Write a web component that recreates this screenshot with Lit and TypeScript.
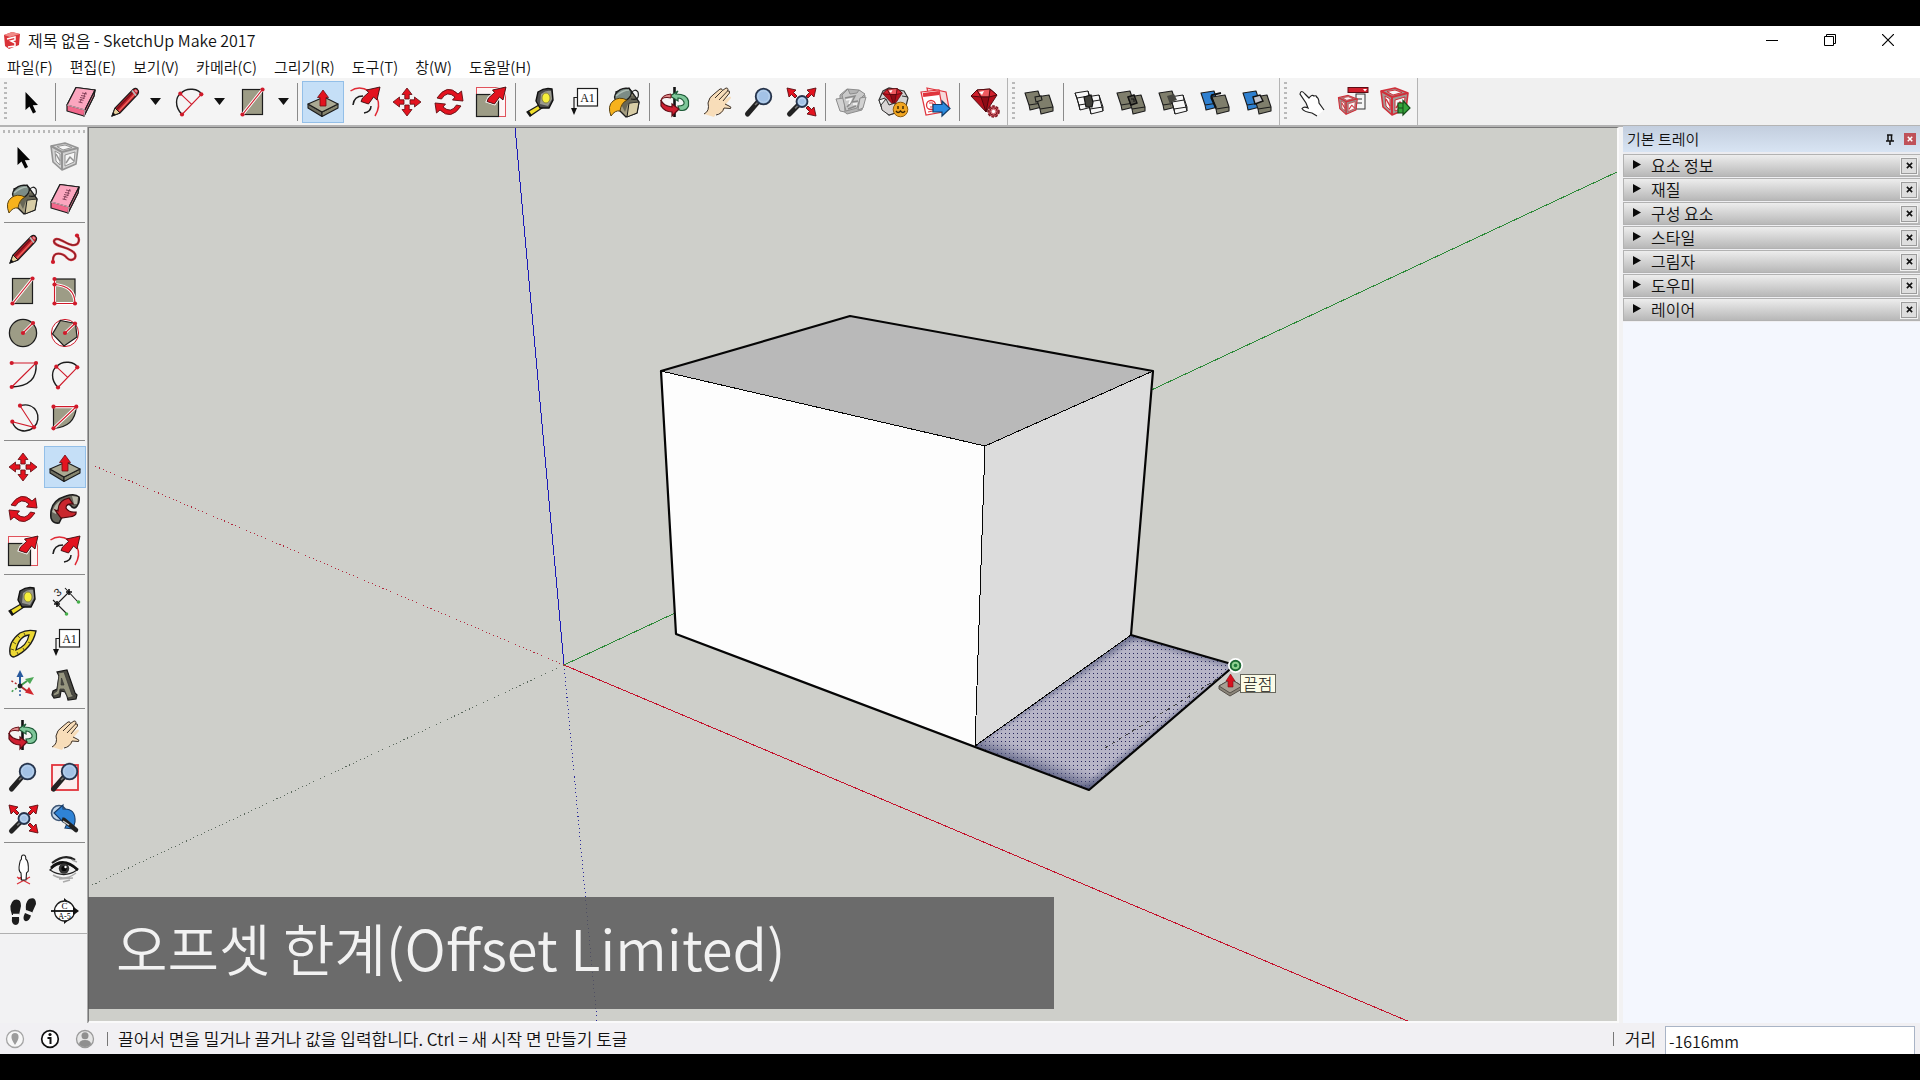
import { LitElement, html, svg, css, SVGTemplateResult } from "lit";
import { customElement, property } from "lit/decorators.js";
import { classMap } from "lit/directives/class-map.js";

const RED = "#e3131f";
const INK = "#1c1c1c";
const STONE = "#9d9c86";
const STONE_DARK = "#6e6d5f";

const dot = (x: number, y: number) => svg`<circle cx=${x} cy=${y} r="2.1" fill="#cf1a2a" />`;
const redLine = (d: string) => svg`
  <path d=${d} fill="none" stroke="#fff" stroke-width="3" />
  <path d=${d} fill="none" stroke="#cf1a2a" stroke-width="1.2" />`;
const wire = (d: string) => svg`<path d=${d} fill="none" stroke="#cf1a2a" stroke-width="1.1" />`;
const curve = (d: string) => svg`<path d=${d} fill="none" stroke=${INK} stroke-width="1.4" />`;

const lens = (cx: number, cy: number, r: number, hx: number, hy: number) => svg`
  <path d=${`M${cx - r * 0.7} ${cy + r * 0.7} L${hx} ${hy}`} stroke="#222" stroke-width="5" stroke-linecap="round" />
  <path d=${`M${cx - r * 0.7} ${cy + r * 0.7} l-3 3`} stroke="#777" stroke-width="1.6" />
  <circle cx=${cx} cy=${cy} r=${r} fill="#8fb4dc" stroke="#26334a" stroke-width="1.8" />
  <circle cx=${cx} cy=${cy} r=${r - 2} fill="#a3c2e6" stroke="#c3d8ee" stroke-width="1" />`;

const cornerArrow = (x: number, y: number, turn: number) => svg`
  <path transform=${`translate(${x} ${y}) rotate(${turn})`}
    d="M0 0 L9 2 L6.5 4.5 L10 8 L8 10 L4.5 6.5 L2 9 Z" fill=${RED} stroke="#5d0d12" stroke-width=".9" />`;

const bigArrow = svg`
  <path d="M31 1 L28 14 L24.500 11 L19.500 18 L12 15.500 L13.500 12 L19.500 6.500 L17.500 4 Z"
    fill=${RED} stroke="#3a0a0c" stroke-width=".9" />`;

const block = (x: number, y: number, fill: string, line = INK) => svg`
  <g transform=${`translate(${x} ${y})`} fill=${fill} stroke=${line} stroke-width="1.1" stroke-linejoin="round">
    <path d="M1 3 L14 1 L18 13 L18 17 L6 20 L5 15 Z" />
    <path d="M5 15 L18 13" fill="none" />
  </g>`;

const wireBlock = (x: number, y: number) => svg`
  <g transform=${`translate(${x} ${y})`} fill="#f7f7f7" stroke=${INK} stroke-width="1" stroke-linejoin="round">
    <path d="M1 3 L14 1 L18 13 L18 17 L6 20 L5 15 Z" />
    <path d="M5 15 L18 13 M1 3 L3 8 L15 6 L14 1 M3 8 L6 20 M15 6 L18 17" fill="none" />
  </g>`;

const crate = (tone: string, stroke: string) => svg`
  <g fill=${tone} stroke=${stroke} stroke-linejoin="round">
    <path d="M2 5 L16 2 L29 7 L27 23 L13 29 L4 21 Z" stroke-width="1.6" />
    <path d="M2 5 L13 11 L29 7 M13 11 V29" fill="none" stroke-width="2" />
    <path d="M6 10 L11 13 V24 L7 20 Z M16 14 L26 11 L25 21 L16 25 Z M8 5.500 L16 4 L23 6.500 L14 9 Z" fill="#f6f6f6" stroke-width="1" />
    <path d="M17 22 L21 16 L25 20 M7 13 L11 20" fill="none" stroke-width="1.5" />
  </g>`;

const gem = (x: number, y: number, s: number) => svg`
  <g transform=${`translate(${x} ${y}) scale(${s})`} stroke="#4b060b" stroke-width=".9" stroke-linejoin="round">
    <path d="M1 9 L7 3 L20 2 L27 8 L16 25 Z" fill="#b3101c" />
    <path d="M7 3 L11 10 L1 9 Z M20 2 L27 8 L19 10 Z" fill="#d0202c" />
    <path d="M7 3 L20 2 L19 10 L11 10 Z" fill="#ee5a5f" />
    <path d="M11 10 L19 10 L16 25 Z" fill="#8d0b15" />
    <path d="M9 5 L14 4 L12 8 Z" fill="#fff" stroke="none" />
  </g>`;

const ICONS: Record<string, SVGTemplateResult> = {
  select: svg`<path d="M10.500 6 V24 L14.500 20.500 L18 27.500 L21 26 L17.800 19.300 L23 19 Z" fill="#050505" />`,
  eraser: svg`
    <g stroke=${INK} stroke-width="1.2" stroke-linejoin="round">
      <path d="M2 19 L11 1.500 L30 4 L29 10 L19 30 L2 25 Z" fill="#f2688b" />
      <path d="M2 19 L11 1.500 L30 4 L20 24 Z" fill="#fba6bf" />
      <path d="M20 24 L30 4 L29 10 L19 30 Z" fill="#f7849f" />
    </g>
    <path d="M2 19 L20 24 L19 30" fill="none" stroke="#fdd3de" stroke-width=".8" />
    <path d="M13.500 16 l4 .8 M14.500 13.500 l4 .8 M15 11.500 l4.500 1 M16 9.500 l4.500 .8 M17 7 l5 1 M15 16 l1.500 -3 M18.500 13 l1 -3 M19 10 l2 -4" fill="none" stroke="#7b3a52" stroke-width=".9" />`,
  pencil: svg`
    <path d="M3 30 L6 22 L24 3.500 Q27 1 29 4 Q30.500 6 28 9 L11 27 Z" fill="#c5202b" stroke=${INK} stroke-width="1.2" />
    <path d="M8 23 L24 6" stroke="#7a0f18" stroke-width="1.600" /><path d="M10 25 L26 8" stroke="#ee6a62" stroke-width="1.200" />
    <path d="M3 30 L6 22 L11 27 Z" fill="#e6cf9c" stroke=${INK} stroke-width="1" /><path d="M3 30 L4.200 26.500 L6.500 28.500 Z" fill="#111" />
    <path d="M23 4.500 L27 9.500" stroke="#bbb" stroke-width="1.800" /><path d="M26 4 L28 6" stroke="#e28b93" stroke-width="2" />`,
  freehand: svg`
    <path d="M4 29 C3 16 15 21 18 25 C22 29 28 26 26 21 C23 14 4 14 5 8 C7 2 17 11 23 12 C31 13 31 5 28 3" fill="none" stroke="#d2303a" stroke-width="2.400" />
    <path d="M4 29 C3 16 15 21 18 25 C22 29 28 26 26 21 C23 14 4 14 5 8 C7 2 17 11 23 12 C31 13 31 5 28 3" fill="none" stroke="#5d1a20" stroke-width=".8" />
    ${dot(4, 29)}${dot(28, 2.5)}`,
  rect: svg`<rect x="5.500" y="3.500" width="20" height="25" fill=${STONE} stroke=${INK} stroke-width="1.200" />
    ${redLine("M5.500 28.500 L25.500 3.500")}${dot(5.5, 28.5)}${dot(25.5, 3.5)}`,
  rotRect: svg`<rect x="6" y="4" width="20" height="24.500" fill=${STONE} stroke=${INK} stroke-width="1.200" />
    ${redLine("M5.500 4 V28.500 H26 Q26 11 5.500 9.500")}${dot(5.5, 4)}${dot(5.5, 9.5)}${dot(5.5, 28.5)}${dot(26, 28.5)}`,
  circle: svg`<circle cx="16" cy="16" r="13.600" fill=${STONE} stroke=${INK} stroke-width="1.300" />
    ${redLine("M16 16 L26 6")}${dot(16, 16)}${dot(26, 6)}`,
  polygon: svg`<circle cx="16" cy="16" r="13.600" fill="#fff" stroke="#cf1a2a" stroke-width="1" />
    <path d="M11.500 3.500 L26.500 6.500 L28 20 L15 29 L3.500 17 Z" fill=${STONE} stroke=${INK} stroke-width="1.200" />
    ${redLine("M16 16 L26 6.500")}${dot(16, 16)}${dot(26, 6.5)}`,
  arc: svg`${curve("M29 4 Q31 27 4.700 28")}${wire("M4.700 4 H29 L4.700 28")}${dot(4.7, 4)}${dot(29, 4)}${dot(4.7, 28)}`,
  arc2: svg`${curve("M9 28.500 C1 20 3 11 7.300 7.700 C14 .5 26 3 28.300 8.300")}${wire("M9 28.500 L28.300 8.300 M7.300 7.700 L18.700 18.300")}${dot(9, 28.5)}${dot(7.3, 7.7)}${dot(28.3, 8.3)}`,
  arc3: svg`${curve("M13 4.700 C29 0 36 17 27 26.300 C19 33 8 30 5.300 20.700")}${wire("M13 4.700 L27 26.300 L5.300 20.700")}${dot(13, 4.7)}${dot(5.3, 20.7)}${dot(27, 26.3)}`,
  pie: svg`<path d="M4.500 5.700 H27.300 Q26 26 4.500 27.300 Z" fill=${STONE} stroke=${INK} stroke-width="1.200" />
    ${redLine("M4.500 5.700 H27.300 L4.500 27.300")}${dot(4.5, 5.7)}${dot(27.3, 5.7)}${dot(4.5, 27.3)}`,
  push: svg`
    <g stroke=${INK} stroke-width="1.100" stroke-linejoin="round">
      <path d="M1 18 L15 26 L15 30.500 L1 22 Z" fill=${STONE_DARK} />
      <path d="M15 26 L31 18 V22 L15 30.500 Z" fill="#87866f" />
      <path d="M1 18 L17 11 L31 18 L15 26 Z" fill="#aaa993" />
    </g>
    <path d="M13 20 V11.500 H10.500 L16 4 L21.500 11.500 H19 V20 Z" fill=${RED} stroke="#6d0c12" stroke-width=".8" />`,
  offset: svg`<path d="M1.500 5 Q10 -1 20 5 M28 12 Q32 20 26 30" fill="none" stroke="#e02a35" stroke-width="1.500" />
    <path d="M4 19 Q5 10 14 10 M22 20 Q22 26 15 27" fill="none" stroke=${INK} stroke-width="1.500" />${bigArrow}`,
  move: svg`<g fill=${RED} stroke="#5d0d12" stroke-width=".8">
      ${[0, 90, 180, 270].map((a) => svg`<path transform=${`rotate(${a} 16 16)`} d="M16 2 L21 8.500 H18.200 V13 H13.800 V8.500 H11 Z" />`)}
    </g>`,
  rotate: svg`<g fill=${RED} stroke="#5d0d12" stroke-width=".9" stroke-linejoin="round">
      <path d="M4 12 Q14 -3 25 8 L28.500 5 L30 15 L19.500 14 L22 11 Q14 4 8.500 13 Z" />
      <path d="M4 12 Q14 -3 25 8 L28.500 5 L30 15 L19.500 14 L22 11 Q14 4 8.500 13 Z" transform="rotate(180 16 16)" />
    </g>`,
  scale: svg`<rect x="1.500" y="1.500" width="29" height="29" fill="#fdf4f4" stroke="#e0525b" stroke-width="1" />
    <rect x="1.500" y="8.500" width="22" height="22" fill=${STONE} stroke=${INK} stroke-width="1.200" />
    <path d="M31 1 L28 14 L24.500 11 L19.500 18 L12 15.500 L13.500 12 L19.500 6.500 L17.500 4 Z" fill=${RED} stroke="#fff" stroke-width="2.600" />${bigArrow}`,
  follow: svg`<path d="M2 25 Q0 8 17 3 Q26 0 30 4 Q31 9 28 13 Q26 16 23 14 Q20 9 15 14 Q10 19 13 24 L10 30 Q4 31 2 25 Z" fill="#66655b" stroke=${INK} stroke-width="1.600" />
    <path d="M3 19 Q6 11 11 8 L14 11 Q8 15 7 21 Z M23 3 L29 4 L28 11 L25 11 Z" fill="#b9b8a9" />
    <path d="M20 5 Q9 7 9 18 L6 17 L12 25 L20 24 Q28 23 27 19 Q20 20 17 15 Q17 10 24 11 Z" fill="#c9262d" stroke="#4b0a0f" stroke-width="1.200" />`,
  tape: svg`<path d="M2 26 L14 19 L17 22 L5 30 Z" fill="#f0df2a" stroke=${INK} stroke-width="1.300" />
    <path d="M3 25 L6 30" stroke="#111" stroke-width="2" />
    <path d="M11 15 L13 6 Q20 1 27 3 L28 14 L24 22 L15 22 Z" fill="#4c4c4c" stroke="#101010" stroke-width="1.400" />
    <path d="M15 18 L16 8 Q21 4 26 5 L27 13 L23 20 Z" fill="#9a9a90" />
    <ellipse cx="21" cy="12" rx="4" ry="5" fill="#f6ef3c" stroke="#7a7530" stroke-width=".8" />`,
  dimension: svg`<path d="M8 19 L20 7 M4 15 L17 28 M16 3 L29 17" stroke=${INK} stroke-width="1.100" />
    <path d="M5 19 H11 M8 16 V22 M17 7 H23 M20 4 V10" stroke="#111" stroke-width="1.600" />
    <circle cx="17.500" cy="29" r="1.800" fill="#46b04a" /><circle cx="29.500" cy="17" r="1.800" fill="#46b04a" />
    <text x="6" y="11" font-size="11" font-family="Liberation Sans" fill="#222" transform="rotate(-40 9 8)">3</text>`,
  protractor: svg`<path d="M3 27 Q1 15 13 6 Q20 2 29 4 Q25 22 7 30 Q4 30 3 27 Z M9 23 Q20 19 22 8 Q12 9 9 23 Z" fill-rule="evenodd" fill="#ecd834" stroke=${INK} stroke-width="1.300" />
    <path d="M4 22 l3 1 M6 15 l3 2 M11 9 l2 2 M17 6 l1 2 M11 27 l-1 -2 M17 23 l-1 -2 M23 16 l-2 -1" stroke="#60571a" stroke-width="1" />`,
  text: svg`<rect x="10.500" y="2.500" width="20" height="17.500" fill="#fff" stroke=${INK} stroke-width="1.200" />
    <path d="M10.500 11.500 H7 V24" fill="none" stroke=${INK} stroke-width="1.200" /><path d="M4 22 H10 L7 29 Z" fill="#111" />
    <text x="20.500" y="15.500" text-anchor="middle" font-size="12" font-family="Liberation Serif" fill="#111">A1</text>`,
  axes: svg`<path d="M13 17 V6" stroke="#285a9e" stroke-width="2" /><path d="M13 1 L16.500 8 H9.500 Z" fill="#285a9e" />
    <path d="M13 17 L20 12" stroke="#3f9a4a" stroke-width="2" /><path d="M27 8 L23 15 L18 10 Z" fill="#4da857" />
    <path d="M13 17 L20 22" stroke="#b32a2f" stroke-width="2" /><path d="M27 26 L18 23.500 L22 18 Z" fill="#d2262e" />
    <path d="M13 17 V28" stroke="#285a9e" stroke-width="1.500" stroke-dasharray="2 2" />
    <path d="M13 17 L4 23" stroke="#3f9a4a" stroke-width="1.500" stroke-dasharray="2 2" />
    <path d="M13 17 L3 11" stroke="#b32a2f" stroke-width="1.500" stroke-dasharray="2 2" /><circle cx="13" cy="17" r="2.400" fill="#222" />`,
  text3d: svg`<path d="M3 26 L4 22 L8 20 L10 7 L8 3 L18 1 L26 24 L28 26 L27 30 L19 31 L18 27 L16 23 L12 22 L11 28 L5 29 Z" fill="#4c4b43" stroke="#171717" stroke-width="1.200" />
    <path d="M4 25 L8 22 L10 6 L9 4 L15 3 L23 26 L26 27 L19 29 L15 20 L11 20 L10 25 L5 27 Z M12 16 L15 16 L12.500 9 Z" fill-rule="evenodd" fill="#96957f" stroke="#333" stroke-width=".7" />`,
  paint: svg`<path d="M7 6 L20 2 L30 16 L28 27 L17 31 L9 23 Z" fill="#a59d80" stroke=${INK} stroke-width="1.400" />
    <path d="M20 17 L30 16 L28 27 L18 31 Z" fill="#d8cda6" stroke=${INK} stroke-width="1" />
    <path d="M10 14 L25 9 L29 16 L19 18 L16 26 Z" fill="#4f4e44" opacity=".7" />
    <ellipse cx="14" cy="9" rx="9" ry="6" transform="rotate(-28 14 9)" fill="#7c8c86" stroke=${INK} stroke-width="1.400" />
    <path d="M7 10 Q14 4 20 4" fill="none" stroke="#aebdb4" stroke-width="1.600" />
    <path d="M22 13 Q31 15 29 6 Q26 2 22 7" fill="none" stroke=${INK} stroke-width="1.200" />
    <path d="M2 30 Q-2 20 4 15 Q10 10 18 14 Q12 17 11 25 Q6 24 2 30 Z" fill="#f7b21c" stroke="#5a4210" stroke-width="1" />`,
  orbit: svg`<path d="M15.500 1 V31" stroke="#111" stroke-width="2.600" />
    <path d="M17 8 Q28 8 29.500 15 V20 Q27 26 20 24 L19 20 Q26 20 25 16 Q23 12 19 12 V15 L11 10 L19 5 Z" fill="#7fc79a" stroke="#1d5a37" stroke-width="1.200" />
    <path d="M12 8 Q2 9 2 15 Q3 10 12 12 Z" fill="#e08b8b" stroke="#6b1219" stroke-width="1" />
    <path d="M2 14 V20 Q6 26 13 26 V30 L20 23 L13 18 V21 Q4 20 2 14 Z" fill="#cf1f30" stroke="#5c0c14" stroke-width="1.200" />`,
  pan: svg`<path d="M3 28 Q9 25 7 17 Q8 11 13 8 L19 3 Q21 2 21.500 4.500 L25 2 Q28 2 26.500 5 Q29 4 28.500 7 L24 14 Q30 8 30 12 L25 18 L28 20 Q31 21 29.500 22.500 L24 22 Q22 28 15 28 L13 31 Z" fill="#f8ddb9" />
    <path d="M3 28 Q9 25 7 17 Q8 11 13 8 L19 3 Q21 2 21.500 4.500 L25 2 Q28 2 26.500 5 Q29 4 28.500 7 L22 15 M21.500 4.500 L14 12 M26.500 5 L18 14 M24 18 L28 20 Q31 21 29.500 22.500 L23 22 Q21 28 15 29" fill="none" stroke="#3c3128" stroke-width="1" />`,
  zoom: svg`${lens(20.5, 10.5, 7.8, 4.5, 28)}`,
  zoomWindow: svg`<rect x="3" y="4" width="26" height="25" fill="#fbeeee" stroke="#e2333b" stroke-width="1.800" />${lens(20.5, 10.5, 7.8, 4.5, 28)}`,
  extents: svg`${cornerArrow(2, 2, 0)}${cornerArrow(31, 2, 90)}${cornerArrow(31, 30, 180)}${lens(17, 15.5, 5.5, 4.5, 28)}`,
  previous: svg`<circle cx="10" cy="10" r="7.500" fill="#c2d6ea" stroke="#3c5575" stroke-width="1.600" />
    <path d="M5 10 L14 2 V6 Q27 5 26 19 L24 26 L16 25 Q20 18 14 15 V19 Z" fill="#2f83d6" stroke="#153a66" stroke-width="1.100" />
    <path d="M15 17 L27 27" stroke="#222" stroke-width="4.500" stroke-linecap="round" /><path d="M14 18 l6 4" stroke="#ccc" stroke-width="1.500" />`,
  warehouse: svg`<g stroke="#8d8d8d" fill="#d2d2d2" stroke-width="1" stroke-linejoin="round">
      <path d="M5 9 L12 3 L24 4 L30 9 L27 24 L12 28 L5 22 Z" fill="#b4b4b4" /><path d="M1 13 L9 12 L10 26 L5 25 Z" />
      <path d="M7 9 L13 3 L15 8 L22 7 L24 4 L30 8 L25 13 L22 22 L11 25 Z" fill="#c9c9c9" /><path d="M25 12 L31 11 L28 22 L23 24 Z" />
    </g><path d="M10 12 L20 10 L17 16 L23 15 M12 21 L16 17 M13 23 L21 20" fill="none" stroke="#8a8a8a" stroke-width="1.500" />
    <path d="M11 14 L16 13 L14 18 M18 18 L22 18" fill="none" stroke="#f7f7f7" stroke-width="1.600" />`,
  extWarehouse: svg`<path d="M2 14 L6 5 L12 2 L27 5 L31 12 L28 24 L12 29 L5 22 Z" fill="#d4d4d4" stroke="#333" stroke-width="1.200" />
    <path d="M2 14 L8 12 L10 25 L5 23 Z M25 10 L31 11" fill="#f2f2f2" stroke="#333" />${gem(5, 1, 0.75)}
    <path d="M4 19 L9 13 L12 19 L18 17 L18 27 L12 29 L5 24 Z" fill="#d9d5d5" stroke="#333" stroke-width="1" />
    <circle cx="23.500" cy="23.500" r="7.300" fill="#f1a621" stroke="#8b5a0d" stroke-width="1" />
    <path d="M21 20 v3 M26 20 v3 M19 25 q2 3 4.500 0 q2.500 3 4.500 0" stroke="#3b2605" stroke-width="1.400" fill="none" />`,
  layout: svg`<g fill="#f6d9da" stroke="#e0343d" stroke-width="1.200"><path d="M8 2 L27 6 L30 22 L12 22 Z" />
      <path d="M2 6 L20 4 L24 26 L7 29 Z" fill="#fff" /><path d="M4 9 L20 7" stroke-width="4" /></g>
    <circle cx="12" cy="19" r="4.500" fill="none" stroke="#e0343d" stroke-width="1.300" /><path d="M10 17 h4 v4 h-3 M9 26 l10 -2" fill="none" stroke="#e0343d" />
    <path d="M14 18.500 H23 V15 L31 22.500 L23 30 V26 H14 Z" fill="#2b8be0" stroke="#123d69" stroke-width="1.200" />`,
  gemGear: svg`${gem(1, 1, 1)}<circle cx="24.500" cy="25.500" r="5.500" fill="#c9505a" stroke="#7c1822" stroke-width="1.600" stroke-dasharray="2.500 1.500" />
    <circle cx="24.500" cy="25.500" r="3.700" fill="#d8727a" stroke="#7c1822" stroke-width="1" /><circle cx="24.500" cy="25.500" r="1.700" fill="#fff" />`,
  outerShell: svg`${block(1, 4, "#7f7e6c")}${block(12, 8, "#7f7e6c")}<path d="M12 11 L18 10 L19 14 L13 16 Z" fill="#7f7e6c" stroke=${INK} stroke-width="1.100" />`,
  intersect: svg`${wireBlock(1, 4)}${wireBlock(12, 8)}<path d="M11 11 L18 9 L20 16 L19 21 L13 21 Z" fill="#3f3f3a" stroke="#111" stroke-width="1.200" />`,
  union: svg`${block(1, 4, "#7f7e6c")}${block(12, 8, "#7f7e6c")}<path d="M13 11 L19 9 L22 17 L16 19 Z" fill="#55544a" stroke="#111" stroke-width="1.400" /><path d="M16 13 h3 v3" fill="none" stroke="#111" />`,
  subtract: svg`${block(1, 4, "#7f7e6c")}${wireBlock(12, 8)}<path d="M10 10 L17 8 L20 14 L14 16 L14 21 Z" fill="#45453f" />`,
  trim: svg`${block(1, 4, "#2f80d0")}${block(12, 8, "#7f7e6c")}<path d="M12 11 L17 22 M12 11 L13 9 L22 7" fill="none" stroke="#111" stroke-width="2" />`,
  split: svg`${block(1, 4, "#2f80d0")}${block(12, 8, "#7f7e6c")}<path d="M12 11 L19 9 L22 15 L14 18 Z" fill="#c6c6cc" stroke="#111" stroke-width="1.400" />`,
  interact: svg`<path d="M5 7 Q6 4 9 7 L14 12 Q17 8 20 10 Q24 11 24 17 L29 24 L22 30 L17 27 Q9 26 7 22 Q8 20 13 22 L10 16 Z" fill="#fff" />
    <path d="M29 24 L24 17 Q24 12 21 10.500 M22 30 L17 27 Q9 26 7 22.500 Q9 20 13 22 L11 17 L5 8 Q6 3 10 8 L14 12 Q17 8 19 10 Q22 9 22 12" fill="none" stroke="#222" stroke-width="1.200" />`,
  options: svg`<rect x="11" y="1.500" width="20" height="5" fill="#d01f2c" stroke="#5c0c14" /><path d="M26 3 h4 l-2 2.500 z" fill="#fff" />
    <rect x="19" y="8" width="9" height="15" fill="#f5f5f5" stroke="#333" /><path d="M20 13 h5 M20 17 h5" stroke="#333" />
    <g transform="translate(0 8) scale(.7)">${crate("#9a8f8b", "#d0303a")}</g>`,
  attributes: svg`${crate("#a39a96", "#d0303a")}<path d="M19 17 H24 V14.500 L31 22 L24 29 V27 H19 Z" fill="#35a53b" stroke="#164b19" stroke-width="1.200" /><path d="M24 17 V27 M19 22 H24" stroke="#164b19" />`,
  component: svg`${crate("#d4d4d4", "#949494")}`,
  position: svg`<path d="M10 31 L23 24 M10 24 L23 31 M11 26 Q16 22 21 26" stroke="#dc3038" stroke-width="1.200" fill="none" />
    <path d="M16.500 2 q2.500 0 2.300 4 q3 2 2.500 12 l-1.800 2 l-.5 7 h-4.500 l-.5 -7 q-3 -2 -1.500 -9 q.5 -4 2 -5 q-.5 -4 2 -4 Z" fill="#fff" stroke=${INK} stroke-width="1.100" />`,
  look: svg`<path d="M3 10 Q16 0 26 7" fill="none" stroke="#222" stroke-width="2.200" /><path d="M1 17 Q14 4 28 17 Q15 26 1 17 Z" fill="#eee" stroke="#222" stroke-width="1.300" />
    <path d="M2 15 Q14 3 29 17" fill="none" stroke="#111" stroke-width="2.600" /><circle cx="15" cy="15.500" r="5.200" fill="#333" /><circle cx="15" cy="15.500" r="2.600" fill="#050505" /><circle cx="16.500" cy="14" r="1.200" fill="#fff" />
    <path d="M4 22 Q15 29 27 20 M10 26 L24 25 M14 29 L21 27 M28 9 L23 7" fill="none" stroke="#aaa" stroke-width="1.500" />`,
  walk: svg`<g fill="#1d1d1d"><path d="M7 5 Q14 3 14 11 L12 20 L5 20 Q1 9 7 5 Z M5 22 H12 Q13 29 9 30 Q4 30 5 22 Z" />
      <path d="M22 4 Q29 1 29 9 L25 18 L19 16 Q18 7 22 4 Z M18 18 L24 20.500 Q22 27 18 26 Q15 24 18 18 Z" /></g>
    <path d="M6 19.500 H12 M19 15.800 L25 18" stroke="#eee" stroke-width="1.500" />`,
  section: svg`<path d="M15 3 L21 8 H15 Z M15 29 L21 24 H15 Z" fill="#111" /><circle cx="15.500" cy="16" r="10" fill="#fff" stroke=${INK} stroke-width="1.300" />
    <path d="M2 16 H26" stroke="#111" stroke-width="1.800" /><path d="M24 11.500 L30 16 L24 20.500 Z" fill="#111" />
    <text x="15.500" y="14" text-anchor="middle" font-size="9" font-family="Liberation Serif">C</text>
    <text x="15.500" y="23.500" text-anchor="middle" font-size="8" font-family="Liberation Serif">A-5</text>`,
};

type Tool = { icon: string; label: string; on?: boolean; drop?: boolean } | "sep";

const t = (icon: string, label: string): Tool => ({ icon, label });

const MAIN_TOOLS: Tool[] = [
  t("select", "선택"), "sep",
  t("eraser", "지우개"),
  { icon: "pencil", label: "선", drop: true },
  { icon: "arc2", label: "호", drop: true },
  { icon: "rect", label: "직사각형", drop: true }, "sep",
  { icon: "push", label: "밀기/끌기", on: true },
  t("offset", "오프셋"), t("move", "이동"), t("rotate", "회전"), t("scale", "배율"), "sep",
  t("tape", "줄자"), t("text", "텍스트"), t("paint", "페인트통"), "sep",
  t("orbit", "궤도"), t("pan", "화면 이동"), t("zoom", "확대/축소"), t("extents", "범위 확대"), "sep",
  t("warehouse", "3D 이미지 웨어하우스"), t("extWarehouse", "확장 프로그램 웨어하우스"), t("layout", "LayOut으로 보내기"), "sep",
  t("gemGear", "확장 프로그램 관리자"),
];
const SOLID_TOOLS: Tool[] = [
  t("outerShell", "외부 쉘"), "sep",
  t("intersect", "교차"), t("union", "결합"), t("subtract", "빼기"), t("trim", "트림"), t("split", "분할"),
];
const DYNAMIC_TOOLS: Tool[] = [t("interact", "상호 작용"), t("options", "구성 요소 옵션"), t("attributes", "구성 요소 속성")];

const SIDE_TOOLS: Tool[][] = [
  [t("select", "선택"), t("component", "구성 요소 만들기"), t("paint", "페인트통"), t("eraser", "지우개")],
  [t("pencil", "선"), t("freehand", "자유형"), t("rect", "직사각형"), t("rotRect", "회전된 직사각형"), t("circle", "원"),
    t("polygon", "다각형"), t("arc", "호"), t("arc2", "2점 호"), t("arc3", "3점 호"), t("pie", "파이")],
  [t("move", "이동"), { icon: "push", label: "밀기/끌기", on: true }, t("rotate", "회전"), t("follow", "따라가기"),
    t("scale", "배율"), t("offset", "오프셋")],
  [t("tape", "줄자"), t("dimension", "치수"), t("protractor", "각도기"), t("text", "텍스트"), t("axes", "축"), t("text3d", "3D 텍스트")],
  [t("orbit", "궤도"), t("pan", "화면 이동"), t("zoom", "확대/축소"), t("zoomWindow", "창 확대/축소"), t("extents", "범위 확대"), t("previous", "이전")],
  [t("position", "카메라 배치"), t("look", "둘러보기"), t("walk", "보행 시선"), t("section", "단면")],
];

@customElement("tool-button")
class ToolButton extends LitElement {
  @property() icon = "";
  @property() label = "";
  @property({ type: Boolean }) on = false;

  static styles = css`
    :host { display: block; }
    button {
      display: grid; place-items: center; width: 100%; height: 42px; padding: 0;
      border: 1px solid transparent; background: none;
    }
    .on { background: #c5dff7; border-color: #93bfe8; }
    .icon { width: 32px; height: 32px; overflow: visible; }
  `;

  render() {
    return html`<button class=${classMap({ on: this.on })} aria-label=${this.label} aria-pressed=${this.on ? "true" : "false"}>
      <svg class="icon" viewBox="0 0 32 32" aria-hidden="true">${ICONS[this.icon]}</svg>
    </button>`;
  }
}

@customElement("tool-strip")
class ToolStrip extends LitElement {
  @property({ attribute: false }) tools: Tool[] = [];

  static styles = css`
    :host { display: flex; align-items: center; padding: 0 1px 0 4px; background: #f4f4f4; border-right: 1px solid #b4b4b4; }
    .grip { width: 3px; height: 40px; margin-right: 3px;
      background: repeating-linear-gradient(#b9b9b9 0 2px, transparent 2px 5px); }
    .sep { width: 1px; height: 38px; margin: 0 4px 0 3px; background: #8a8a8a; }
    tool-button { width: 42px; }
    .split { display: flex; align-items: center; }
    .split tool-button { width: 45px; }
    .drop { width: 19px; height: 42px; padding: 0 5px 0 3px; border: 0; background: none; }
    .drop svg { display: block; width: 11px; height: 7px; }
  `;

  render() {
    return html`<div class="grip"></div>
      ${this.tools.map((tool) => {
        if (tool === "sep") return html`<div class="sep"></div>`;
        const button = html`<tool-button .icon=${tool.icon} .label=${tool.label} .on=${!!tool.on}></tool-button>`;
        return tool.drop
          ? html`<div class="split">${button}<button class="drop" aria-label="${tool.label} 도구 목록">
              <svg viewBox="0 0 11 7" aria-hidden="true"><path d="M0 0 H11 L5.500 7 Z" fill="#111" /></svg>
            </button></div>`
          : button;
      })}`;
  }
}

@customElement("model-view")
class ModelView extends LitElement {
  static styles = css`
    :host { display: block; position: relative; overflow: hidden; background: #cecfca; }
    .scene { position: absolute; inset: 0; width: 100%; height: 100%; }
    .tag { font: 300 16px "Noto Sans CJK KR", sans-serif; }
  `;

  render() {
    return html`<svg class="scene" viewBox="89 128 1528 893" preserveAspectRatio="xMinYMin slice" role="img" aria-label="모델">
      <defs>
        <pattern id="dots" width="4" height="4" patternUnits="userSpaceOnUse">
          <rect width="4" height="4" fill="#b7b5c7" /><rect x="1" y="1" width="1" height="1" fill="#24245c" />
        </pattern>
        <linearGradient id="nearEdge" gradientUnits="userSpaceOnUse" x1="1032" y1="768" x2="1038" y2="752">
          <stop offset="0" stop-color="#4a5075" stop-opacity=".7" /><stop offset=".6" stop-color="#4a5075" stop-opacity=".2" /><stop offset="1" stop-color="#4a5075" stop-opacity="0" />
        </linearGradient>
        <linearGradient id="wallEdge" gradientUnits="userSpaceOnUse" x1="1052" y1="690" x2="1056" y2="696">
          <stop offset="0" stop-color="#4a5075" stop-opacity=".55" /><stop offset="1" stop-color="#4a5075" stop-opacity="0" />
        </linearGradient>
        <linearGradient id="farEdge" gradientUnits="userSpaceOnUse" x1="1182" y1="650" x2="1180" y2="657">
          <stop offset="0" stop-color="#4a5075" stop-opacity=".45" /><stop offset="1" stop-color="#4a5075" stop-opacity="0" />
        </linearGradient>
        <linearGradient id="outEdge" gradientUnits="userSpaceOnUse" x1="1162" y1="728" x2="1158" y2="723">
          <stop offset="0" stop-color="#4a5075" stop-opacity=".5" /><stop offset="1" stop-color="#4a5075" stop-opacity="0" />
        </linearGradient>
      </defs>
      <g fill="none" stroke-width="1" shape-rendering="crispEdges">
        <path d="M515 127 L564 665" stroke="#1a1ab8" />
        <path d="M564 665 L597 1022" stroke="#2a2a9a" stroke-dasharray="1 3" />
        <path d="M564 665 L1617 172" stroke="#2c8a38" />
        <path d="M564 665 L90 886" stroke="#5c6a5e" stroke-dasharray="1 3" />
        <path d="M564 665 L1410 1022" stroke="#c4122c" />
        <path d="M564 665 L90 464" stroke="#b02a3e" stroke-dasharray="1 3" />
      </g>
      <path d="M661 371 L850 316 L1153 371 L985 446 Z" fill="#b9b9b9" />
      <path d="M661 371 L985 446 L975 746 L676 634 Z" fill="#fdfdfd" />
      <path d="M985 446 L1153 371 L1131 635 L975 746 Z" fill="#dcdcdc" />
      <path d="M975 746 L1131 635 L1235 665 L1089 790 Z" fill="url(#dots)" />
      <path d="M975 746 L1089 790 L1108 774 L998 730 Z" fill="url(#nearEdge)" />
      <path d="M975 746 L1131 635 L1141 638 L990 752 Z" fill="url(#wallEdge)" />
      <path d="M1131 635 L1235 665 L1226 673 L1122 641 Z" fill="url(#farEdge)" />
      <path d="M1235 665 L1089 790 L1080 786 L1222 661 Z" fill="url(#outEdge)" />
      <g fill="none" stroke="#050505" stroke-linejoin="round" stroke-linecap="round">
        <path d="M661 371 L985 446 L1153 371 M985 446 L975 746 M975 746 L1131 635" stroke-width="1" shape-rendering="crispEdges" />
        <path d="M661 371 L850 316 L1153 371 L1131 635 L1235 665 L1089 790 L676 634 Z" stroke-width="2.200" />
        <path d="M1105 748 L1222 676" stroke="#444" stroke-width="1" stroke-dasharray="4 4" stroke-linecap="butt" shape-rendering="crispEdges" />
      </g>
      <circle cx="1235.500" cy="665.500" r="7.500" fill="#fff" />
      <circle cx="1235.500" cy="665.500" r="4.800" fill="#8fd18f" stroke="#1d6a33" stroke-width="2" />
      <circle cx="1235.500" cy="665.500" r="1.800" fill="#1d7a3a" />
      <g stroke="#55504a" stroke-width="1" stroke-linejoin="round">
        <path d="M1219 686 L1231 679 L1242 686 V689 L1230 696 L1219 689 Z" fill="#8b8579" />
        <path d="M1219 686 L1231 679 L1242 686 L1230 693 Z" fill="#a79f93" />
      </g>
      <path d="M1228 687 V681 H1226 L1230.500 674 L1235 681 H1233 V687 Z" fill="#d8121e" stroke="#7e0d14" stroke-width=".6" />
      <rect x="1240.500" y="674.500" width="35" height="18" fill="#fbfbe6" stroke="#66665c" />
      <text class="tag" x="1243" y="690" fill="#111">끝점</text>
    </svg>`;
  }
}

@customElement("tray-panel")
class TrayPanel extends LitElement {
  static styles = css`
    :host { display: flex; flex-direction: column; background: #f4f7fe; }
    .head {
      display: flex; align-items: center; gap: 8px; height: 26px; padding: 0 4px;
      background: linear-gradient(#c3cede, #d8e4f3); border-bottom: 2px solid #ececf0;
    }
    h2 { flex: 1; margin: 0; font-size: 15px; font-weight: inherit; line-height: 24px; }
    button { padding: 0; }
    .pin { width: 14px; height: 14px; border: 0; background: none; }
    .close { display: grid; place-items: center; width: 12px; height: 12px; border: 0; background: #bf5159; }
    .pin svg, .close svg { display: block; }
    ul { margin: 0; padding: 0; list-style: none; background: #efeff2; }
    li {
      display: flex; align-items: center; height: 23px; margin-bottom: 1px; padding-right: 3px; box-sizing: border-box;
      border: 1px solid #b2b2b2; border-right: 0; background: linear-gradient(#ededed, #b8b8b8);
    }
    .open {
      flex: 1; display: flex; align-items: center; gap: 10px; height: 21px; padding: 0 0 2px 9px;
      border: 0; background: none; color: #111; font: inherit; font-size: 16px; line-height: 20px; text-align: left;
    }
    .shut {
      display: grid; place-items: center; width: 16px; height: 16px; box-sizing: border-box;
      border: 1px solid #9c9c9c; outline: 1px solid #f2f2f2; background: #dedede;
    }
  `;

  private readonly panels = ["요소 정보", "재질", "구성 요소", "스타일", "그림자", "도우미", "레이어"];

  render() {
    return html`
      <div class="head">
        <h2>기본 트레이</h2>
        <button class="pin" aria-label="자동 숨기기">
          <svg viewBox="0 0 14 14" width="14" height="14"><path d="M6 3 V9 M5 3 H10.500 M9.500 3 V9 M4 9 H12 M8 9 V13" fill="none" stroke="#111" stroke-width="1.500" /></svg>
        </button>
        <button class="close" aria-label="트레이 닫기">
          <svg viewBox="0 0 8 8" width="6" height="6"><path d="M1 1 L7 7 M7 1 L1 7" stroke="#fff" stroke-width="2" /></svg>
        </button>
      </div>
      <ul>
        ${this.panels.map((name) => html`<li>
          <button class="open" aria-expanded="false">
            <svg viewBox="0 0 8 9" width="8" height="9" aria-hidden="true"><path d="M0 0 L8 4.500 L0 9 Z" fill="#0a0a0a" /></svg>
            <span>${name}</span>
          </button>
          <button class="shut" aria-label="${name} 닫기">
            <svg viewBox="0 0 8 8" width="7" height="7" aria-hidden="true"><path d="M1 1 L7 7 M7 1 L1 7" stroke="#111" stroke-width="1.800" /></svg>
          </button>
        </li>`)}
      </ul>`;
  }
}

@customElement("app-root")
class AppRoot extends LitElement {
  static styles = css`
    :host {
      display: flex; flex-direction: column; box-sizing: border-box; min-height: 100vh; padding: 26px 0; background: #000;
      color: #111; font-family: "Noto Sans CJK KR", "Noto Sans", sans-serif; font-weight: 350;
    }
    .title { display: flex; align-items: center; height: 28px; padding: 0 3px; background: #fff; }
    .logo { width: 18px; height: 18px; margin-right: 7px; }
    h1 { flex: 1; margin: 0; font-size: 16px; font-weight: inherit; line-height: 28px; }
    .win { display: grid; place-items: center; width: 58px; height: 28px; padding: 0; border: 0; background: none; }
    .menu { display: flex; gap: 17px; height: 24px; padding: 0 7px; background: #fff; }
    .menu button { padding: 1px 0 0; border: 0; background: none; color: #111; font: inherit; font-size: 15px; line-height: 24px; }
    .bars { display: flex; height: 47px; background: #f0f0f0; border-bottom: 2px solid #b4b4b4; }
    .work { flex: 1; display: flex; background: #f2f2f3; }
    .side { width: 88px; border-right: 1px solid #a9a9a9; box-sizing: border-box; }
    .tools { padding: 3px 0 1px 2px; background: #f4f4f4; border-bottom: 1px solid #b0b0b0; }
    .grip { height: 3px; margin: 0 2px 3px 1px; background: repeating-linear-gradient(90deg, #b9b9b9 0 2px, transparent 2px 5px); }
    .group { display: grid; grid-template-columns: 42px 42px; }
    .rule { height: 1px; margin: 2px 2px 5px; background: #8a8a8a; }
    .stage { position: relative; flex: 1; display: flex; border: solid; border-width: 1px 2px 2px 1px; border-color: #777 #fafafa #fafafa #777; }
    model-view { flex: 1; }
    .caption {
      position: absolute; left: -1px; bottom: 12px; display: flex; align-items: center; width: 63.2%; height: 112px;
      box-sizing: border-box; padding: 0 28px 12px; background: rgba(88, 88, 88, .84); color: #f2f2f2;
      font-size: 56px; line-height: 80px; white-space: nowrap;
    }
    tray-panel { width: 297px; margin: -1px 0 0 4px; }
    .status { display: flex; align-items: center; height: 31px; background: #f1f0f3; font-size: 17px; }
    .badge { width: 20px; height: 20px; margin: 0 5px; padding: 0; border: 0; background: none; }
    .badges { display: flex; gap: 5px; margin-right: 7px; }
    .bar { width: 1px; height: 14px; background: #777; }
    .hint { flex: 1; margin: 0 0 0 10px; line-height: 26px; }
    label { padding: 0 9px 0 11px; font-size: 17px; }
    input {
      width: 250px; height: 28px; align-self: flex-end; box-sizing: border-box; margin-right: 5px; padding: 0 3px;
      border: 1px solid #a9b4c6; border-bottom: 0; border-radius: 0; background: #fff; color: #111; font: inherit; font-size: 16px;
    }
  `;

  private readonly menus = ["파일(F)", "편집(E)", "보기(V)", "카메라(C)", "그리기(R)", "도구(T)", "창(W)", "도움말(H)"];

  private side(tool: Tool) {
    return tool === "sep" ? null : html`<tool-button .icon=${tool.icon} .label=${tool.label} .on=${!!tool.on}></tool-button>`;
  }

  render() {
    return html`
      <header class="title">
        <svg class="logo" viewBox="0 0 18 18" aria-hidden="true">
          <path d="M1 4 L9 1 L17 3 L16 14 L6 18 L2 15 Z" fill="#d93238" />
          <path d="M1 4 L9 1 L17 3 L7 6 Z" fill="#f08a87" />
          <path d="M4 8 L12 6 V9 L8 10 L12 12 V15 L5 16" fill="none" stroke="#fff" stroke-width="1.500" />
        </svg>
        <h1>제목 없음 - SketchUp Make 2017</h1>
        <button class="win" aria-label="최소화"><svg width="12" height="12"><path d="M0 6.500 H12" stroke="#000" /></svg></button>
        <button class="win" aria-label="이전 크기로 복원"><svg width="12" height="12"><path d="M.5 2.500 H9.500 V11.500 H.5 Z M2.500 2.500 V.5 H11.500 V9.500 H9.500" fill="none" stroke="#000" /></svg></button>
        <button class="win" aria-label="닫기"><svg width="12" height="12"><path d="M0 0 L12 12 M12 0 L0 12" stroke="#000" stroke-width="1.200" /></svg></button>
      </header>
      <nav class="menu" aria-label="메뉴">${this.menus.map((m) => html`<button>${m}</button>`)}</nav>
      <div class="bars">
        <tool-strip .tools=${MAIN_TOOLS}></tool-strip>
        <tool-strip .tools=${SOLID_TOOLS}></tool-strip>
        <tool-strip .tools=${DYNAMIC_TOOLS}></tool-strip>
      </div>
      <main class="work">
        <aside class="side">
          <div class="tools">
            <div class="grip"></div>
            ${SIDE_TOOLS.map((group, i) => html`
              ${i ? html`<div class="rule"></div>` : null}
              <div class="group">${group.map((tool) => this.side(tool))}</div>`)}
          </div>
        </aside>
        <section class="stage">
          <model-view></model-view>
          <div class="caption">오프셋 한계(Offset Limited)</div>
        </section>
        <tray-panel></tray-panel>
      </main>
      <footer class="status">
        <div class="badges">
          <button class="badge" aria-label="위치"><svg width="20" height="20" viewBox="0 0 20 20"><circle cx="10" cy="10" r="8.500" fill="#f7f7f7" stroke="#a5a5a5" stroke-width="1.300" /><path d="M10 16 Q6 10 6.500 7.500 A3.500 3.500 0 0 1 13.500 7.500 Q14 10 10 16 Z" fill="#9c9c9c" /></svg></button>
          <button class="badge" aria-label="정보"><svg width="20" height="20" viewBox="0 0 20 20"><circle cx="10" cy="10" r="8.300" fill="#fff" stroke="#111" stroke-width="1.700" /><circle cx="10" cy="5.500" r="1.600" fill="#111" /><path d="M7.500 9 H10.500 V15" stroke="#111" stroke-width="2" fill="none" /></svg></button>
          <button class="badge" aria-label="로그인"><svg width="20" height="20" viewBox="0 0 20 20"><circle cx="10" cy="10" r="8.500" fill="#e6e6e6" stroke="#9a9a9a" stroke-width="1.300" /><circle cx="10" cy="6.800" r="3.500" fill="#8f8f8f" /><path d="M4 15.500 Q4 11 10 11 Q16 11 16 15.500 Q13 18 10 18 Q7 18 4 15.500 Z" fill="#8f8f8f" /></svg></button>
        </div>
        <div class="bar"></div>
        <p class="hint">끌어서 면을 밀거나 끌거나 값을 입력합니다. Ctrl = 새 시작 면 만들기 토글</p>
        <div class="bar"></div>
        <label for="distance">거리</label>
        <input id="distance" type="text" value="-1616mm" />
      </footer>`;
  }
}
